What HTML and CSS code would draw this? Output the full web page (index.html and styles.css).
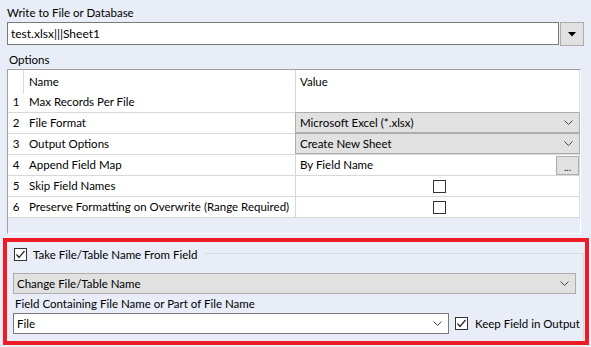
FILE: index.html
```html
<!DOCTYPE html>
<html lang="en">
<head>
    <meta charset="UTF-8">
    <meta name="viewport" content="width=device-width, initial-scale=1.0">
    <title>Write to File or Database</title>
    <link rel="stylesheet" href="styles.css">
</head>
<body>
    <div class="field-label title">Write to File or Database</div>

    <!-- output path + browse button -->
    <div class="path-row">
        <div class="path-input">test.xlsx|||Sheet1</div>
        <div class="drop-btn">
            <svg width="8" height="5" viewBox="0 0 8 5"><polygon points="0,0 8,0 4,4.5" fill="#000"/></svg>
        </div>
    </div>

    <div class="field-label options-label">Options</div>

    <!-- options grid -->
    <div class="grid">
        <div class="grid-row head">
            <div class="num"></div>
            <div class="name">Name</div>
            <div class="value">Value</div>
        </div>
        <div class="grid-row">
            <div class="num">1</div>
            <div class="name">Max Records Per File</div>
            <div class="value"></div>
        </div>
        <div class="grid-row">
            <div class="num">2</div>
            <div class="name">File Format</div>
            <div class="value combo-cell">
                <span>Microsoft Excel (*.xlsx)</span>
                <svg class="chev" width="9" height="5" viewBox="0 0 9 5"><polyline points="0.5,0.5 4.5,4.5 8.5,0.5" fill="none" stroke="#444" stroke-width="1"/></svg>
            </div>
        </div>
        <div class="grid-row">
            <div class="num">3</div>
            <div class="name">Output Options</div>
            <div class="value combo-cell">
                <span>Create New Sheet</span>
                <svg class="chev" width="9" height="5" viewBox="0 0 9 5"><polyline points="0.5,0.5 4.5,4.5 8.5,0.5" fill="none" stroke="#444" stroke-width="1"/></svg>
            </div>
        </div>
        <div class="grid-row">
            <div class="num">4</div>
            <div class="name">Append Field Map</div>
            <div class="value text-cell">
                <span>By Field Name</span>
                <div class="dots-btn">...</div>
            </div>
        </div>
        <div class="grid-row">
            <div class="num">5</div>
            <div class="name">Skip Field Names</div>
            <div class="value check-cell"><span class="check"></span></div>
        </div>
        <div class="grid-row">
            <div class="num">6</div>
            <div class="name">Preserve Formatting on Overwrite (Range Required)</div>
            <div class="value check-cell"><span class="check"></span></div>
        </div>
    </div>

    <!-- highlighted section -->
    <div class="highlight">
        <div class="group">
            <div class="group-head">
                <span class="check checked">
                    <svg width="11" height="11" viewBox="0 0 11 11"><polyline points="1.5,5.5 4,8.5 9.5,2" fill="none" stroke="#222" stroke-width="1.2"/></svg>
                </span>
                <span class="group-title">Take File/Table Name From Field</span>
                <span class="group-line"></span>
            </div>
            <div class="group-body">
                <div class="combo gray">
                    <span>Change File/Table Name</span>
                    <svg class="chev" width="9" height="5" viewBox="0 0 9 5"><polyline points="0.5,0.5 4.5,4.5 8.5,0.5" fill="none" stroke="#444" stroke-width="1"/></svg>
                </div>
                <div class="field-label sub-label">Field Containing File Name or Part of File Name</div>
                <div class="file-row">
                    <div class="combo white">
                        <span>File</span>
                        <svg class="chev" width="9" height="5" viewBox="0 0 9 5"><polyline points="0.5,0.5 4.5,4.5 8.5,0.5" fill="none" stroke="#444" stroke-width="1"/></svg>
                    </div>
                    <span class="check checked">
                        <svg width="11" height="11" viewBox="0 0 11 11"><polyline points="1.5,5.5 4,8.5 9.5,2" fill="none" stroke="#222" stroke-width="1.2"/></svg>
                    </span>
                    <span class="keep-label">Keep Field in Output</span>
                </div>
            </div>
        </div>
    </div>
</body>
</html>
```

FILE: styles.css
```css
body {
    margin: 0;
    background-color: #E9EDF8;
    color: #000000;
    font-family: Lato, "Liberation Sans", sans-serif;
    font-size: 11.5px;
}
.field-label {
    line-height: 16px;
    white-space: nowrap;
}
.title {
    padding: 5px 7px 0;
    margin-bottom: 1px;
}
.path-row {
    display: flex;
    align-items: flex-start;
    margin-left: 7px;
}
.path-input {
    box-sizing: border-box;
    width: 552px;
    height: 23px;
    line-height: 21px;
    padding-left: 3px;
    font-size: 12px;
    background-color: #FFFFFF;
    border: 1px solid #7A7A7A;
}
.drop-btn {
    box-sizing: border-box;
    width: 24px;
    height: 24px;
    margin-left: 1px;
    background-color: #E1E1E1;
    border: 1px solid #ADADAD;
    display: flex;
    align-items: center;
    justify-content: center;
}
.options-label {
    margin: 6px 0 1px 9px;
}

/* grid */
.grid {
    box-sizing: border-box;
    width: 574px;
    height: 165px;
    margin-left: 7px;
    border-top: 1px solid #A0A0A0;
    border-left: 1px solid #A0A0A0;
    border-right: 1px solid #FFFFFF;
    border-bottom: 1px solid #FFFFFF;
}
.grid-row {
    display: grid;
    grid-template-columns: 16px 271px 1fr;
    height: 21px;
    line-height: 20px;
    background-color: #FFFFFF;
    border-bottom: 1px solid #D8D8D8;
    box-sizing: border-box;
    white-space: nowrap;
}
.grid-row.head {
    height: 22px;
    line-height: 24px;
    border-bottom: none;
}
.grid-row.head .num {
    border-right: 1px solid #D8D8D8;
}
.num {
    text-align: center;
}
.name {
    padding-left: 5px;
}
.value {
    padding-left: 4px;
    border-left: 1px solid #D8D8D8;
    border-right: 1px solid #D8D8D8;
}
.combo-cell {
    display: flex;
    align-items: center;
    justify-content: space-between;
    margin-top: -1px;
    height: 21px;
    box-sizing: border-box;
    background-color: #E1E1E1;
    border: 1px solid #ADADAD;
    padding-right: 6px;
    padding-left: 4px;
}
.text-cell {
    display: flex;
    align-items: center;
    justify-content: space-between;
    padding-right: 0;
}
.dots-btn {
    box-sizing: border-box;
    width: 23px;
    height: 19px;
    line-height: 20px;
    text-align: center;
    font-size: 10px;
    background-color: #E1E1E1;
    border: 1px solid #ADADAD;
}
.check-cell {
    display: flex;
    align-items: center;
    justify-content: center;
}
.check {
    box-sizing: border-box;
    display: inline-flex;
    align-items: center;
    justify-content: center;
    width: 13px;
    height: 13px;
    background-color: #FFFFFF;
    border: 1px solid #333333;
    flex: none;
}

/* highlighted block */
.highlight {
    box-sizing: border-box;
    width: 586px;
    height: 107px;
    margin: 4px 0 0 3px;
    border: 4px solid #ED1C24;
}
.group {
    height: 100%;
    padding: 0 1px 0 7px;
}
.group-head {
    display: flex;
    align-items: center;
    height: 15px;
    padding-top: 5px;
}
.group-title {
    margin-left: 6px;
    line-height: 15px;
    white-space: nowrap;
}
.group-line {
    flex: 1;
    align-self: stretch;
    margin: 6px 0 0 8px;
    border-top: 1px solid #D5DAE3;
    border-right: 1px solid #D5DAE3;
}
.group-body {
    height: 78px;
    border-right: 1px solid #D5DAE3;
    padding-top: 11px;
    box-sizing: border-box;
}
.combo {
    box-sizing: border-box;
    height: 21px;
    display: flex;
    align-items: center;
    justify-content: space-between;
    padding: 0 6px 0 3px;
}
.combo.gray {
    width: 563px;
    margin-left: -1px;
    background-color: #E1E1E1;
    border: 1px solid #ADADAD;
}
.combo.white {
    width: 436px;
    background-color: #FFFFFF;
    border: 1px solid #7A7A7A;
}
.sub-label {
    margin: 2px 0 1px 1px;
}
.file-row {
    display: flex;
    align-items: center;
    margin-left: -1px;
}
.file-row .check {
    margin-left: 6px;
}
.keep-label {
    margin-left: 7px;
    white-space: nowrap;
}
```
